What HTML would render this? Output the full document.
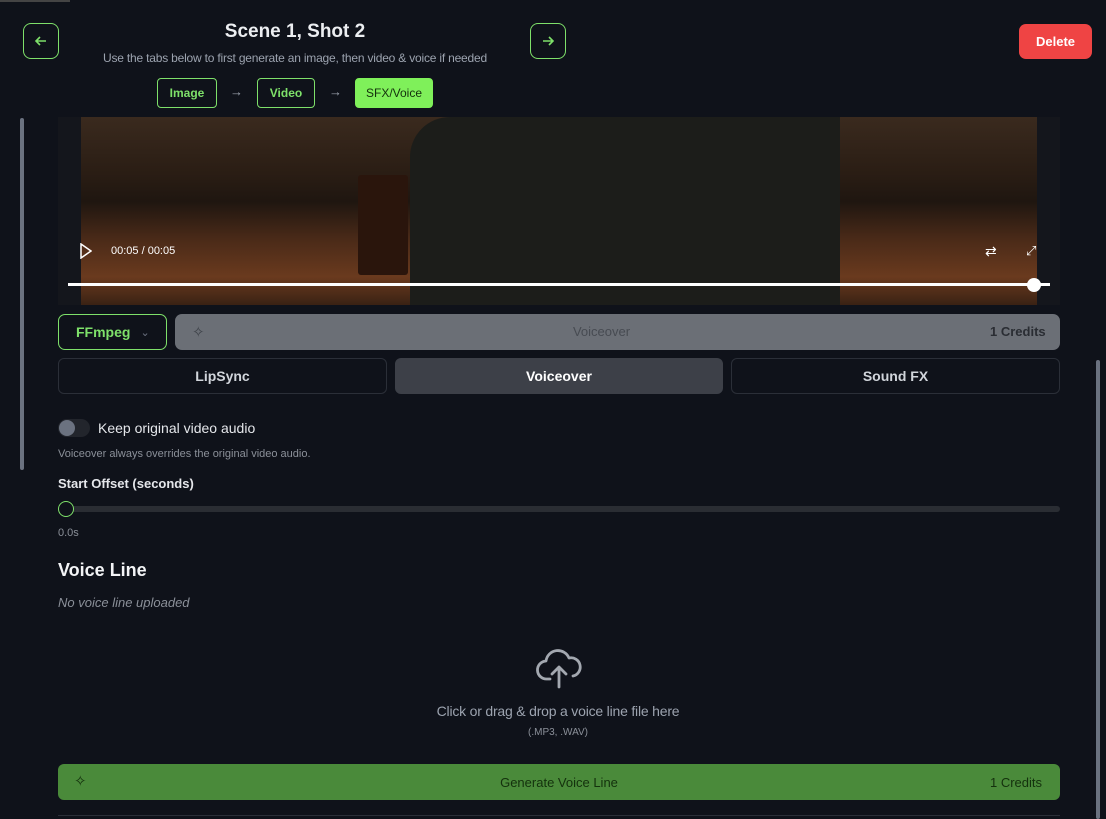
<!DOCTYPE html>
<html><head><style>
*{box-sizing:border-box;margin:0;padding:0}
body{width:1106px;height:819px;overflow:hidden;background:#0f121a;font-family:"Liberation Sans",sans-serif;color:#e5e7eb;position:relative}
.abs{position:absolute}
.nav{width:36px;height:36px;border:1px solid #7ee06a;border-radius:8px;display:flex;align-items:center;justify-content:center}
.tab{height:30px;border:1px solid #7ee06a;border-radius:4px;color:#7ee06a;font-size:12px;font-weight:bold;display:flex;align-items:center;justify-content:center}
.btn{border:1px solid #2b2f38;border-radius:6px;height:36px;display:flex;align-items:center;justify-content:center;font-size:14px;font-weight:bold;color:#d1d5db}
</style></head><body>
<div class="abs" style="left:0;top:0;width:70px;height:2px;background:#444"></div>
<div class="abs nav" style="left:23px;top:23px"><svg width="14" height="14" viewBox="0 0 14 14"><path d="M12 7H2M6 3L2 7l4 4" stroke="#7ee06a" stroke-width="1.6" fill="none"/></svg></div>
<div class="abs nav" style="left:530px;top:23px"><svg width="14" height="14" viewBox="0 0 14 14"><path d="M2 7h10M8 3l4 4-4 4" stroke="#7ee06a" stroke-width="1.6" fill="none"/></svg></div>
<div class="abs" style="left:95px;top:21px;width:400px;text-align:center;font-size:19px;font-weight:bold;color:#eceef1">Scene 1, Shot 2</div>
<div class="abs" style="left:70px;top:51px;width:450px;text-align:center;font-size:12px;color:#9ca3af;letter-spacing:-0.2px">Use the tabs below to first generate an image, then video &amp; voice if needed</div>
<div class="abs tab" style="left:157px;top:78px;width:60px">Image</div>
<div class="abs" style="left:230px;top:84px;color:#9ca3af;font-size:13px">→</div>
<div class="abs tab" style="left:257px;top:78px;width:58px">Video</div>
<div class="abs" style="left:329px;top:84px;color:#9ca3af;font-size:13px">→</div>
<div class="abs tab" style="left:355px;top:78px;width:78px;background:#7ff05a;border-color:#7ff05a;color:#14310d;font-weight:normal">SFX/Voice</div>
<div class="abs" style="left:1019px;top:24px;width:73px;height:35px;background:#ef4444;border-radius:7px;color:#fff;font-size:13px;font-weight:bold;display:flex;align-items:center;justify-content:center">Delete</div>
<div class="abs" style="left:20px;top:118px;width:4px;height:352px;background:#6b7280;border-radius:2px"></div>
<div class="abs" style="left:1096px;top:360px;width:4px;height:459px;background:#6b7280;border-radius:2px"></div>
<!-- video -->
<div class="abs" style="left:58px;top:117px;width:1002px;height:188px;background:#14161c"></div>
<div class="abs" style="left:81px;top:117px;width:956px;height:188px;background:linear-gradient(180deg,#3a2a1e 0%,#2a1d14 30%,#1f1610 45%,#4a2a18 65%,#6a3a1e 85%,#3a2214 100%)"></div>
<div class="abs" style="left:410px;top:117px;width:430px;height:188px;background:#1c1d1a;border-radius:40px 0 0 0"></div>
<div class="abs" style="left:358px;top:175px;width:50px;height:100px;background:#2a150c;border-radius:3px"></div>
<div class="abs" style="left:80px;top:243px"><svg width="12" height="16"><path d="M1 1l10 7-10 7z" stroke="#fff" stroke-width="1.5" fill="none"/></svg></div>
<div class="abs" style="left:111px;top:245px;font-size:11px;color:#fff">00:05 / 00:05</div>
<div class="abs" style="left:985px;top:243px;color:#fff;font-size:14px">⇄</div>
<div class="abs" style="left:1026px;top:243px;color:#fff;font-size:13px">⤢</div>
<div class="abs" style="left:68px;top:283px;width:982px;height:3px;background:#fff"></div>
<div class="abs" style="left:1027px;top:278px;width:14px;height:14px;border-radius:50%;background:#fff"></div>
<!-- controls -->
<div class="abs" style="left:58px;top:314px;width:109px;height:36px;border:1px solid #7ee06a;border-radius:7px;display:flex;align-items:center;padding-left:17px;color:#7ee06a;font-weight:bold;font-size:14px">FFmpeg <span style="color:#6b7280;font-weight:normal;margin-left:10px;font-size:11px">⌄</span></div>
<div class="abs" style="left:175px;top:314px;width:885px;height:36px;background:#6b6f76;border-radius:7px"></div>
<div class="abs" style="left:192px;top:323px;color:#3f434a;font-size:15px">✧</div>
<div class="abs" style="left:175px;top:324px;width:853px;text-align:center;font-size:13px;color:#474b52">Voiceover</div>
<div class="abs" style="left:990px;top:324px;font-size:13px;color:#2a2d33;font-weight:bold">1 Credits</div>
<div class="abs btn" style="left:58px;top:358px;width:329px">LipSync</div>
<div class="abs btn" style="left:395px;top:358px;width:328px;background:#3d4048;border-color:#3d4048;color:#fff">Voiceover</div>
<div class="abs btn" style="left:731px;top:358px;width:329px">Sound FX</div>
<div class="abs" style="left:58px;top:419px;width:32px;height:18px;border-radius:9px;background:#22252c"></div>
<div class="abs" style="left:59px;top:420px;width:16px;height:16px;border-radius:50%;background:#6b7280"></div>
<div class="abs" style="left:98px;top:420px;font-size:14px;color:#e5e7eb">Keep original video audio</div>
<div class="abs" style="left:58px;top:448px;font-size:11px;color:#8b9099">Voiceover always overrides the original video audio.</div>
<div class="abs" style="left:58px;top:476px;font-size:13px;font-weight:bold;color:#e5e7eb">Start Offset (seconds)</div>
<div class="abs" style="left:58px;top:506px;width:1002px;height:6px;border-radius:3px;background:#2a2d33"></div>
<div class="abs" style="left:58px;top:501px;width:16px;height:16px;border-radius:50%;background:#0f121a;border:1.5px solid #7ee06a"></div>
<div class="abs" style="left:58px;top:527px;font-size:11px;color:#8b9099">0.0s</div>
<div class="abs" style="left:58px;top:560px;font-size:18px;font-weight:bold;color:#f3f4f6">Voice Line</div>
<div class="abs" style="left:58px;top:595px;font-size:13px;font-style:italic;color:#8b9099">No voice line uploaded</div>
<div class="abs" style="left:535px;top:645px"><svg width="48" height="44" viewBox="0 0 48 44"><path d="M15 34H12a9 9 0 0 1-1-18 12 12 0 0 1 23-3 9 9 0 0 1 4 18M24 42V22M17 29l7-7 7 7" stroke="#a3a8b0" stroke-width="2.8" fill="none" stroke-linecap="round" stroke-linejoin="round"/></svg></div>
<div class="abs" style="left:358px;top:703px;width:400px;text-align:center;font-size:14px;color:#9ca3af;letter-spacing:-0.2px">Click or drag &amp; drop a voice line file here</div>
<div class="abs" style="left:358px;top:727px;width:400px;text-align:center;font-size:10px;color:#8b9099">(.MP3, .WAV)</div>
<div class="abs" style="left:58px;top:764px;width:1002px;height:36px;background:#4a8a3a;border-radius:6px"></div>
<div class="abs" style="left:74px;top:772px;color:#14310d;font-size:15px">✧</div>
<div class="abs" style="left:58px;top:775px;width:1002px;text-align:center;font-size:13px;color:#14310d">Generate Voice Line</div>
<div class="abs" style="left:990px;top:775px;font-size:13px;color:#14310d">1 Credits</div>
<div class="abs" style="left:58px;top:815px;width:1002px;height:4px;border-top:1px solid #2b2f38"></div>
</body></html>
